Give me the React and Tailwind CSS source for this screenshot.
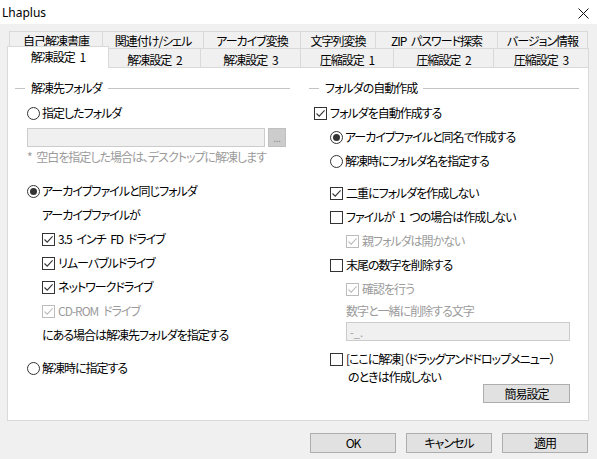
import React from "react";

const Check = ({ checked, disabled }) => (
  <span
    className={
      disabled
        ? "w-[13px] h-[13px] border border-[#bcbcbc] bg-white flex items-center justify-center shrink-0"
        : "w-[13px] h-[13px] border border-[#333333] bg-white flex items-center justify-center shrink-0"
    }
  >
    {checked && (
      <svg width="11" height="11" viewBox="0 0 11 11">
        <path
          d="M1.5 5.5 L4.2 8.2 L9.6 2.4"
          fill="none"
          stroke={disabled ? "#bcbcbc" : "#333333"}
          strokeWidth="1.1"
        />
      </svg>
    )}
  </span>
);

const Radio = ({ checked }) => (
  <span className="w-[13px] h-[13px] rounded-full border border-[#333333] bg-white flex items-center justify-center shrink-0">
    {checked && <span className="w-[7px] h-[7px] rounded-full bg-[#333333]" />}
  </span>
);

const GroupHeader = ({ title }) => (
  <div className="h-[16px] flex items-center">
    <span className="w-[10px] h-px bg-[#c4c4c4]" />
    <span className="px-[6px] leading-[16px]">{title}</span>
    <span className="flex-1 h-px bg-[#c4c4c4]" />
  </div>
);

const row1 = [
  ["自己解凍書庫", "w-[93px] border-l"],
  ["関連付け/シェル", "w-[101px] border-l"],
  ["アーカイブ変換", "w-[97px] border-l"],
  ["文字列変換", "w-[75px] border-l"],
  ["ZIP パスワード探索", "w-[122px] border-l"],
  ["バージョン情報", "w-[91px] border-l border-r"],
];

const row2 = [
  ["解凍設定 2", "w-[92px]"],
  ["解凍設定 3", "w-[100px]"],
  ["圧縮設定 1", "w-[93px]"],
  ["圧縮設定 2", "w-[100px]"],
  ["圧縮設定 3", "w-[95px]"],
];

export default function App() {
  return (
    <div className="w-[597px] h-[459px] bg-[#f0f0f0] flex flex-col text-[12px] text-black font-['Noto_Sans_CJK_JP','Noto_Sans',sans-serif] [font-feature-settings:'palt'] tracking-[-1px] [word-spacing:3px] overflow-hidden">
      {/* title bar */}
      <div className="h-[24px] bg-white flex items-center justify-between pl-[2px] pr-[8px] shrink-0">
        <span className="font-['Noto_Sans',sans-serif] text-[12px] leading-[16px] mt-[1px] tracking-normal">Lhaplus</span>
        <svg width="11" height="11" viewBox="0 0 11 11" className="mt-[2px]">
          <path d="M0.5 0.5 L10.5 10.5 M10.5 0.5 L0.5 10.5" stroke="#111" strokeWidth="1" />
        </svg>
      </div>

      {/* tabs */}
      <div className="mt-[7px] flex h-[17px] ml-[9px]">
        {row1.map(([t, c]) => (
          <div
            key={t}
            className={`${c} border-t border-[#d9d9d9] bg-[#f0f0f0] flex items-center justify-center pt-[1px] leading-[14px] whitespace-nowrap`}
          >
            {t}
          </div>
        ))}
      </div>
      <div className="flex h-[19px] ml-[7px] items-start">
        <div className="relative z-10 w-[102px] h-[22px] -mt-[2px] bg-white border-l border-t border-r border-[#d9d9d9] flex items-center justify-center pb-[2px] leading-[14px]">
          解凍設定 1
        </div>
        {row2.map(([t, c]) => (
          <div
            key={t}
            className={`${c} h-[19px] border-t border-r border-[#d9d9d9] bg-[#f0f0f0] flex items-center justify-center pt-[3px] leading-[14px] whitespace-nowrap`}
          >
            {t}
          </div>
        ))}
      </div>

      {/* panel */}
      <div className="ml-[7px] w-[582px] h-[354px] bg-white border border-[#d9d9d9] flex pt-[12px] shrink-0">
        {/* left column */}
        <div className="ml-[7px] w-[275px] flex flex-col">
          <GroupHeader title="解凍先フォルダ" />
          <div className="mt-[5px] h-[24px] flex items-center pl-[12px] gap-[2px]">
            <Radio />
            <span>指定したフォルダ</span>
          </div>
          <div className="mt-[3px] h-[19px] flex pl-[12px] gap-[3px]">
            <div className="w-[238px] h-[19px] bg-[#f0f0f0] border border-[#cccccc]" />
            <div className="w-[18px] h-[19px] bg-[#cccccc] border border-[#bfbfbf] flex items-center justify-center text-[#8a8a8a] text-[9px] leading-[10px] pt-[3px] tracking-normal">
              ...
            </div>
          </div>
          <div className="mt-[2px] h-[16px] flex items-center pl-[12px] text-[#9b9b9b] leading-[16px] whitespace-nowrap">
            * 空白を指定した場合は、デスクトップに解凍します
          </div>
          <div className="mt-[14px] h-[24px] flex items-center pl-[12px] gap-[2px]">
            <Radio checked />
            <span>アーカイブファイルと同じフォルダ</span>
          </div>
          <div className="h-[24px] flex items-center pl-[27px]">アーカイブファイルが</div>
          <div className="h-[24px] flex items-center pl-[27px] gap-[3px]">
            <Check checked />
            <span>3.5 インチ FD ドライブ</span>
          </div>
          <div className="h-[24px] flex items-center pl-[27px] gap-[3px]">
            <Check checked />
            <span>リムーバブルドライブ</span>
          </div>
          <div className="h-[24px] flex items-center pl-[27px] gap-[3px]">
            <Check checked />
            <span>ネットワークドライブ</span>
          </div>
          <div className="h-[24px] flex items-center pl-[27px] gap-[3px]">
            <Check checked disabled />
            <span className="text-[#9b9b9b]">CD-ROM ドライブ</span>
          </div>
          <div className="h-[24px] flex items-center pl-[27px]">にある場合は解凍先フォルダを指定する</div>
          <div className="mt-[9px] h-[24px] flex items-center pl-[12px] gap-[2px]">
            <Radio />
            <span>解凍時に指定する</span>
          </div>
        </div>

        {/* right column */}
        <div className="ml-[19px] w-[270px] flex flex-col">
          <GroupHeader title="フォルダの自動作成" />
          <div className="mt-[5px] h-[24px] flex items-center pl-[5px] gap-[3px]">
            <Check checked />
            <span>フォルダを自動作成する</span>
          </div>
          <div className="h-[24px] flex items-center pl-[21px] gap-[2px]">
            <Radio checked />
            <span>アーカイブファイルと同名で作成する</span>
          </div>
          <div className="h-[24px] flex items-center pl-[21px] gap-[2px]">
            <Radio />
            <span>解凍時にフォルダ名を指定する</span>
          </div>
          <div className="mt-[8px] h-[24px] flex items-center pl-[21px] gap-[3px]">
            <Check checked />
            <span>二重にフォルダを作成しない</span>
          </div>
          <div className="h-[24px] flex items-center pl-[21px] gap-[3px]">
            <Check />
            <span>ファイルが 1 つの場合は作成しない</span>
          </div>
          <div className="h-[24px] flex items-center pl-[37px] gap-[3px]">
            <Check checked disabled />
            <span className="text-[#9b9b9b]">親フォルダは開かない</span>
          </div>
          <div className="h-[24px] flex items-center pl-[21px] gap-[3px]">
            <Check />
            <span>末尾の数字を削除する</span>
          </div>
          <div className="h-[24px] flex items-center pl-[37px] gap-[3px]">
            <Check checked disabled />
            <span className="text-[#9b9b9b]">確認を行う</span>
          </div>
          <div className="h-[20px] flex items-center pl-[37px] text-[#9b9b9b]">数字と一緒に削除する文字</div>
          <div className="mt-[1px] ml-[37px] w-[224px] h-[19px] bg-[#f0f0f0] border border-[#cccccc] flex items-center pl-[3px] text-[#9b9b9b] text-[11px] leading-[12px] tracking-normal">
            -_.
          </div>
          <div className="mt-[9px] flex pl-[21px] gap-[3px]">
            <div className="h-[18px] flex items-center">
              <Check />
            </div>
            <div className="flex flex-col leading-[18px]">
              <span className="whitespace-nowrap">[ここに解凍]（ドラッグアンドドロップメニュー）</span>
              <span className="pl-[2px]">のときは作成しない</span>
            </div>
          </div>
          <div className="-mt-[2px] flex justify-end pr-[9px]">
            <div className="w-[87px] h-[19px] bg-[#e1e1e1] border border-[#adadad] flex items-center justify-center leading-[14px]">
              簡易設定
            </div>
          </div>
        </div>
      </div>

      {/* bottom buttons */}
      <div className="mt-[12px] flex justify-end pr-[9px] gap-[10px]">
        {["OK", "キャンセル", "適用"].map((t) => (
          <div
            key={t}
            className="w-[86px] h-[20px] bg-[#e1e1e1] border border-[#adadad] flex items-center justify-center leading-[14px]"
          >
            {t}
          </div>
        ))}
      </div>
    </div>
  );
}
